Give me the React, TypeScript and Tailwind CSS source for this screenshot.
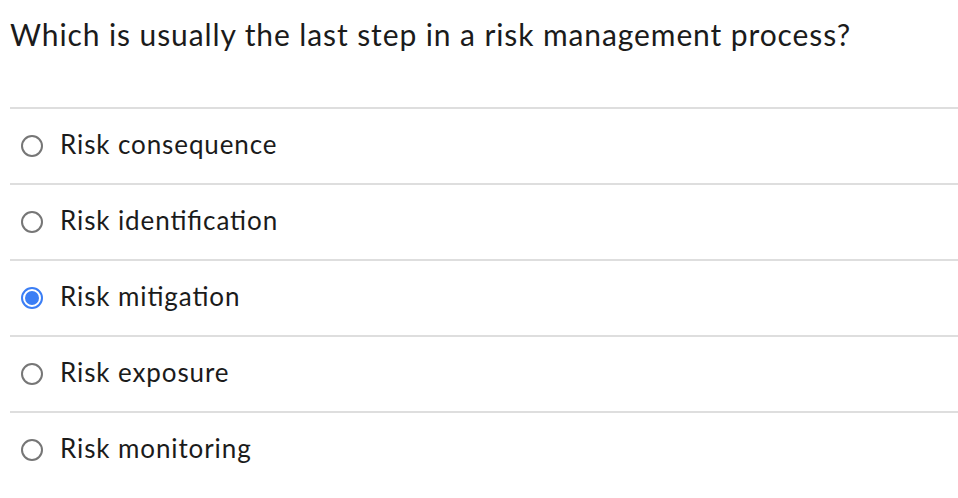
const options = [
  { label: 'Risk consequence', checked: false },
  { label: 'Risk identification', checked: false },
  { label: 'Risk mitigation', checked: true },
  { label: 'Risk exposure', checked: false },
  { label: 'Risk monitoring', checked: false },
];

function Radio({ checked }: { checked: boolean }) {
  if (checked) {
    return (
      <span className="flex h-[22px] w-[22px] flex-shrink-0 items-center justify-center rounded-full border-2 border-[#3b7ef5] bg-white">
        <span className="h-[14px] w-[14px] rounded-full bg-[#3b7ef5]" />
      </span>
    );
  }
  return <span className="h-[22px] w-[22px] flex-shrink-0 rounded-full border-2 border-[#767676] bg-white" />;
}

export default function App() {
  return (
    <div className="min-h-[498px] bg-white pl-[10px] font-['Lato',sans-serif] text-[#1b1b1b] [font-variant-ligatures:common-ligatures] [font-feature-settings:'liga'_1]">
      <h1 className="pt-[16px] text-[30px] leading-[36px] tracking-[0.9px]">
        Which is usually the last step in a risk management process?
      </h1>
      <div className="mt-[55px]">
        {options.map((opt) => (
          <div key={opt.label} className="border-t-2 border-[#dedede]">
            <label className="flex h-[74px] items-center gap-[17px] pl-[11px]">
              <Radio checked={opt.checked} />
              <span className="-mt-[5px] text-[26px] leading-[30px] tracking-[0.9px]">{opt.label}</span>
            </label>
          </div>
        ))}
      </div>
    </div>
  );
}
